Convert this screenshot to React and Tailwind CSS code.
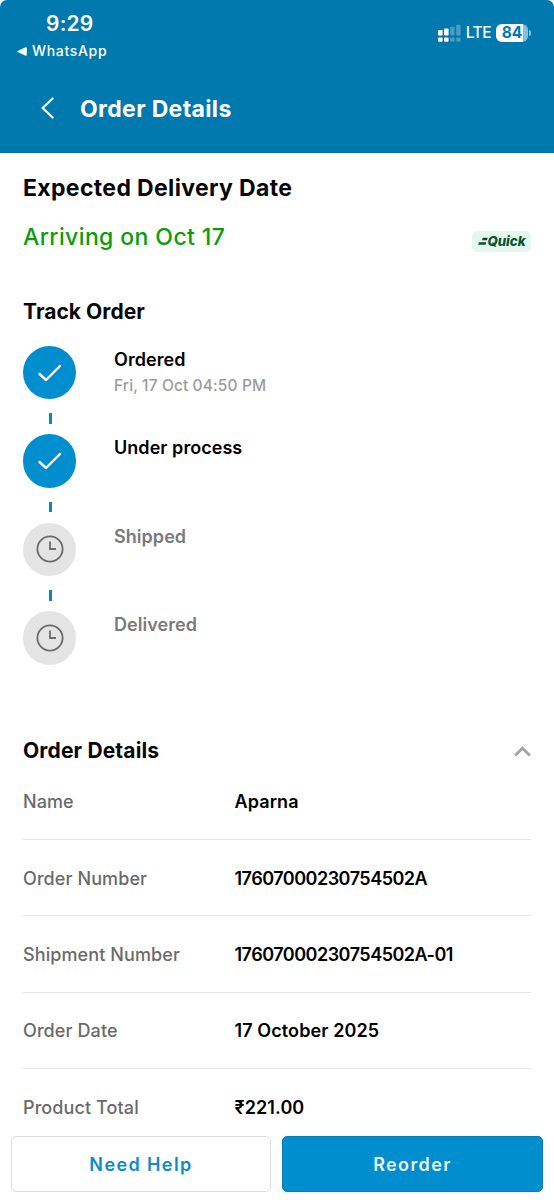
const steps = [
  { id: 'ordered', title: 'Ordered', time: 'Fri, 17 Oct 04:50 PM', done: true },
  { id: 'process', title: 'Under process', done: true },
  { id: 'shipped', title: 'Shipped', done: false },
  { id: 'delivered', title: 'Delivered', done: false },
];

const details = [
  { label: 'Name', value: 'Aparna' },
  { label: 'Order Number', value: '17607000230754502A', isId: true },
  { label: 'Shipment Number', value: '17607000230754502A-01', isId: true },
  { label: 'Order Date', value: '17 October 2025' },
  { label: 'Product Total', value: '₹221.00' },
];

function SignalIcon() {
  return (
    <svg width="23" height="18" viewBox="0 0 23 18" fill="#fff">
      <rect x="0" y="6" width="4.6" height="5.6" rx="1" />
      <rect x="6" y="4.5" width="4.6" height="7.1" rx="1" />
      <rect x="12.2" y="2.8" width="4.4" height="8.8" rx="1" opacity="0.28" />
      <rect x="18.2" y="0.8" width="4.4" height="10.8" rx="1" opacity="0.28" />
      <rect x="0" y="13.4" width="4.6" height="4.4" rx="1" />
      <rect x="6" y="13.4" width="4.6" height="4.4" rx="1" />
      <rect x="12.2" y="13.4" width="4.4" height="4.4" rx="1" opacity="0.28" />
      <rect x="18.2" y="13.4" width="4.4" height="4.4" rx="1" opacity="0.28" />
    </svg>
  );
}

function Battery() {
  return (
    <div className="flex items-center gap-px">
      <div className="flex h-[18.5px] w-[32px] items-center justify-center rounded-[6px] bg-linear-to-r from-white from-84% to-[#84c0dc] to-84% text-[15.5px] font-bold leading-none text-[#0079ae]">
        84
      </div>
      <div className="h-[6px] w-[2px] rounded-r-full bg-[#84c0dc]" />
    </div>
  );
}

function Header() {
  return (
    <header className="h-[153px] rounded-t-[7px] border-b border-[#0571a0] bg-[#0079ae] text-white">
      <div className="flex h-[70px] justify-between pl-[17px] pr-[23px]">
        <div className="flex flex-col">
          <div className="mt-[10px] pl-[29px] text-[21px] font-[560] leading-[28px] tracking-[0.2px]">9:29</div>
          <div className="mt-[3px] flex items-center gap-[5px] text-[14px] font-[450] leading-[20px] tracking-[0.68px]">
            <svg width="10" height="9" viewBox="0 0 10 9" fill="#fff">
              <path d="M0.6 4 8.6 0.2Q9.8 0 9.8 1V8Q9.8 9 8.6 8.7L0.6 5Q-0.2 4.5 0.6 4Z" />
            </svg>
            <span>WhatsApp</span>
          </div>
        </div>
        <div className="mt-[24px] flex h-[18px] items-center">
          <SignalIcon />
          <span className="ml-[5px] mr-[5px] text-[15.5px] font-medium tracking-[-0.5px]">LTE</span>
          <Battery />
        </div>
      </div>
      <div className="flex h-[76px] items-center pl-[41px]">
        <svg width="13" height="22" viewBox="0 0 13 22" fill="none" stroke="#fff" strokeWidth="2.2" strokeLinecap="round" strokeLinejoin="round">
          <path d="M11.6 1.5 1.6 11l10 9.5" />
        </svg>
        <h1 className="ml-[26px] mt-px text-[23px] font-bold leading-[28px] tracking-[0.35px]">Order Details</h1>
      </div>
    </header>
  );
}

function QuickBadge() {
  return (
    <div className="flex h-[21px] w-[59px] items-center justify-center rounded-[5px] bg-[#e5f7ee] text-[#075232]">
      <svg width="10" height="9" viewBox="0 0 10 9" fill="currentColor">
        <path d="M4.8 0.8h5L9 3.3H4z" />
        <path d="M1 5.3h7.4l-.8 2.5H.2z" />
      </svg>
      <span className="text-[13.2px] font-extrabold italic leading-[16px]">Quick</span>
    </div>
  );
}

function ClockIcon() {
  return (
    <svg width="28" height="28" viewBox="0 0 28 28" fill="none" stroke="#6b6b6b" strokeWidth="1.8">
      <circle cx="14" cy="14" r="12.6" />
      <path d="M14 6.6V14h6" />
    </svg>
  );
}

function Step({ step, last }) {
  return (
    <li className="flex h-[88.4px]">
      <div className="flex w-[53px] flex-col items-center">
        <div className={`flex size-[53.4px] shrink-0 items-center justify-center rounded-full ${step.done ? 'bg-[#018ecf]' : 'bg-[#e4e4e4]'}`}>
          {step.done ? (
            <svg width="24" height="18" viewBox="0 0 24 18" fill="none" stroke="#fff" strokeWidth="2.4" strokeLinecap="round" strokeLinejoin="round">
              <path d="M1.5 10 8 16 22 2" />
            </svg>
          ) : (
            <ClockIcon />
          )}
        </div>
        {!last && <div className="ml-[2px] mt-[14px] h-[10.5px] w-[2.6px] bg-[#0a86c2]" />}
      </div>
      <div className="ml-[38px] flex flex-col">
        <span className={`text-[18px] font-[580] leading-[28px] tracking-[0.05px] ${step.done ? 'text-black' : 'text-[#7a7a7a]'}`}>{step.title}</span>
        {step.time && <span className="text-[15.5px] font-medium leading-[24px] tracking-[0.12px] text-[#9b9b9b]">{step.time}</span>}
      </div>
    </li>
  );
}

export default function App() {
  return (
    <div className="flex h-[1200px] w-[554px] flex-col overflow-hidden bg-white font-['Inter',sans-serif]">
      <Header />

      <main className="flex-1 overflow-hidden px-[23px]">
        <section>
          <h2 className="mt-[21px] text-[23px] font-bold leading-[28px] tracking-[0.35px] text-[#060606]">Expected Delivery Date</h2>
          <div className="mt-[19px] flex items-center justify-between">
            <p className="text-[23px] font-medium leading-[32px] tracking-[0.4px] text-[#0a9d0a]">Arriving on Oct 17</p>
            <div className="mt-[8px]">
              <QuickBadge />
            </div>
          </div>
        </section>

        <section>
          <h2 className="mt-[45px] text-[21px] font-bold leading-[28px] tracking-[0.05px] text-[#060606]">Track Order</h2>
          <ul className="mt-[20px]">
            {steps.map((step, i) => (
              <Step key={step.id} step={step} last={i === steps.length - 1} />
            ))}
          </ul>
        </section>

        <section>
          <div className="mt-[37.5px] flex h-[28px] items-center justify-between">
            <h2 className="text-[21px] font-bold leading-[28px] tracking-[0.15px] text-[#060606]">Order Details</h2>
            <svg width="17" height="11" viewBox="0 0 17 11" fill="none" stroke="#a3a3a8" strokeWidth="2.8">
              <path d="M1.2 9.6 8.5 2.2l7.3 7.4" />
            </svg>
          </div>
          <dl className="mt-[-1.5px]">
            {details.map((row) => (
              <div key={row.label} className="flex h-[76.35px] items-center border-b-[1.5px] border-[#e6e6e6] pt-[2px] text-[18px] leading-[24px]">
                <dt className="w-[211.5px] font-medium tracking-[0.1px] text-[#6a6a6a]">{row.label}</dt>
                <dd className={`font-[580] text-black ${row.isId ? 'tracking-[-0.5px]' : 'tracking-[0.1px]'}`}>{row.value}</dd>
              </div>
            ))}
          </dl>
        </section>
      </main>

      <footer className="flex h-[64px] shrink-0 gap-[11px] bg-white px-[11px] pb-[8px] text-[18px] font-semibold tracking-[1.4px]">
        <button className="w-[260px] rounded-[5px] border border-[#dedede] bg-white text-[#0b8bcb]">Need Help</button>
        <button className="flex-1 rounded-[5px] border border-[#0a7db5] bg-[#018ecf] text-[#e6f6fd]">Reorder</button>
      </footer>
    </div>
  );
}
